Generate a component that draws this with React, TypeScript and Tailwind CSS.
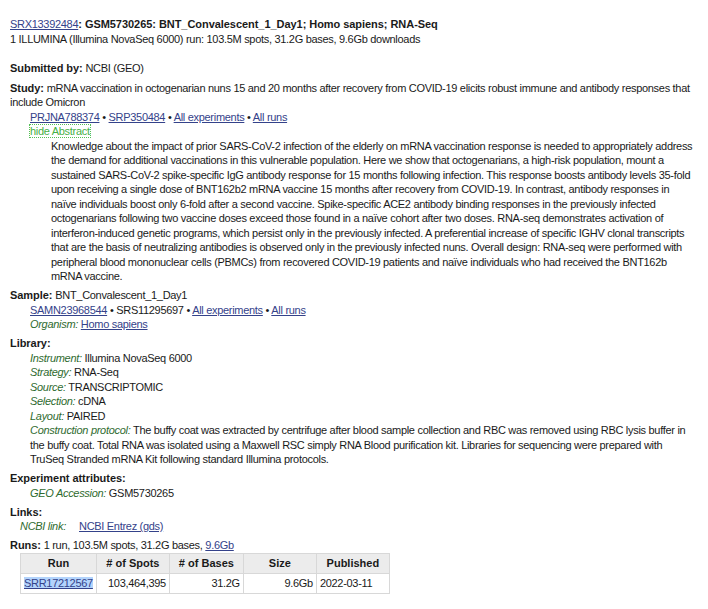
import React from "react";

const A = ({ children }: { children: React.ReactNode }) => (
  <a href="#" className="text-[#34428a] underline decoration-[#34428a]">
    {children}
  </a>
);

const L = ({ children }: { children: React.ReactNode }) => (
  <span className="italic text-[#2f6b2f]">{children}</span>
);

const B = ({ children }: { children: React.ReactNode }) => (
  <b className="font-bold tracking-[-0.05px]">{children}</b>
);

const Dot = () => <span> • </span>;

export default function App() {
  return (
    <div
      className="bg-white text-[#1a1a1a] text-[11px] tracking-[-0.3px] leading-[14.5px] pl-[10px] pr-[14px] pt-[17px] w-[708px] h-[609px] overflow-hidden"
      style={{ fontFamily: '"Liberation Sans", Arial, Helvetica, sans-serif' }}
    >
      <div>
        <A>SRX13392484</A>
        <B>: GSM5730265: BNT_Convalescent_1_Day1; Homo sapiens; RNA-Seq</B>
      </div>
      <div>1 ILLUMINA (Illumina NovaSeq 6000) run: 103.5M spots, 31.2G bases, 9.6Gb downloads</div>
      <div className="h-[14.5px]" />

      <div>
        <B>Submitted by:</B> NCBI (GEO)
      </div>

      <div className="mt-[5.5px]">
        <B>Study:</B> mRNA vaccination in octogenarian nuns 15 and 20 months after recovery from COVID-19 elicits robust immune and antibody responses that include Omicron
      </div>
      <div className="pl-[20px]">
        <div>
          <A>PRJNA788374</A>
          <Dot />
          <A>SRP350484</A>
          <Dot />
          <A>All experiments</A>
          <Dot />
          <A>All runs</A>
        </div>
        <div className="h-[14.5px] flex items-center">
          <span className="inline-block border border-dotted border-[#55c055] text-[#45b045] leading-[12px] -ml-[1px]">
            hide Abstract
          </span>
        </div>
        <div className="pl-[21px]">
          Knowledge about the impact of prior SARS-CoV-2 infection of the elderly on mRNA vaccination response is needed to appropriately address the demand for additional vaccinations in this vulnerable population. Here we show that octogenarians, a high-risk population, mount a sustained SARS-CoV-2 spike-specific IgG antibody response for 15 months following infection. This response boosts antibody levels 35-fold upon receiving a single dose of BNT162b2 mRNA vaccine 15 months after recovery from COVID-19. In contrast, antibody responses in naïve individuals boost only 6-fold after a second vaccine. Spike-specific ACE2 antibody binding responses in the previously infected octogenarians following two vaccine doses exceed those found in a naïve cohort after two doses. RNA-seq demonstrates activation of interferon-induced genetic programs, which persist only in the previously infected. A preferential increase of specific IGHV clonal transcripts that are the basis of neutralizing antibodies is observed only in the previously infected nuns. Overall design: RNA-seq were performed with peripheral blood mononuclear cells (PBMCs) from recovered COVID-19 patients and naïve individuals who had received the BNT162b mRNA vaccine.
        </div>
      </div>

      <div className="mt-[4.5px]">
        <B>Sample:</B> BNT_Convalescent_1_Day1
      </div>
      <div className="pl-[20px]">
        <div>
          <A>SAMN23968544</A>
          <Dot />
          SRS11295697
          <Dot />
          <A>All experiments</A>
          <Dot />
          <A>All runs</A>
        </div>
        <div>
          <L>Organism:</L> <A>Homo sapiens</A>
        </div>
      </div>

      <div className="mt-[4.5px]">
        <B>Library:</B>
      </div>
      <div className="pl-[20px]">
        <div>
          <L>Instrument:</L> Illumina NovaSeq 6000
        </div>
        <div>
          <L>Strategy:</L> RNA-Seq
        </div>
        <div>
          <L>Source:</L> TRANSCRIPTOMIC
        </div>
        <div>
          <L>Selection:</L> cDNA
        </div>
        <div>
          <L>Layout:</L> PAIRED
        </div>
        <div>
          <L>Construction protocol:</L> The buffy coat was extracted by centrifuge after blood sample collection and RBC was removed using RBC lysis buffer in the buffy coat. Total RNA was isolated using a Maxwell RSC simply RNA Blood purification kit. Libraries for sequencing were prepared with TruSeq Stranded mRNA Kit following standard Illumina protocols.
        </div>
      </div>

      <div className="mt-[4.5px]">
        <B>Experiment attributes:</B>
      </div>
      <div className="pl-[20px]">
        <L>GEO Accession:</L> GSM5730265
      </div>

      <div className="mt-[4.5px]">
        <B>Links:</B>
      </div>
      <div className="pl-[10px] flex">
        <span className="w-[59px]">
          <L>NCBI link:</L>
        </span>
        <A>NCBI Entrez (gds)</A>
      </div>

      <div className="mt-[4.5px]">
        <B>Runs:</B> 1 run, 103.5M spots, 31.2G bases, <A>9.6Gb</A>
      </div>
      <table className="ml-[10px] border-collapse">
        <thead>
          <tr className="bg-[#ececec]">
            <th className="w-[73px] h-[20px] border border-[#d8d8d8] font-bold tracking-normal text-center">Run</th>
            <th className="w-[73px] border border-[#d8d8d8] font-bold tracking-normal text-center"># of Spots</th>
            <th className="w-[74px] border border-[#d8d8d8] font-bold tracking-normal text-center"># of Bases</th>
            <th className="w-[73px] border border-[#d8d8d8] font-bold tracking-normal text-center">Size</th>
            <th className="w-[73px] border border-[#d8d8d8] font-bold tracking-normal text-center">Published</th>
          </tr>
        </thead>
        <tbody>
          <tr>
            <td className="h-[20px] border border-[#d8d8d8] px-[3px] text-left">
              <span className="bg-[#b3d4fc]">
                <A>SRR17212567</A>
              </span>
            </td>
            <td className="border border-[#d8d8d8] px-[3px] text-right">103,464,395</td>
            <td className="border border-[#d8d8d8] px-[3px] text-right">31.2G</td>
            <td className="border border-[#d8d8d8] px-[3px] text-right">9.6Gb</td>
            <td className="border border-[#d8d8d8] px-[3px] text-left">2022-03-11</td>
          </tr>
        </tbody>
      </table>
    </div>
  );
}
